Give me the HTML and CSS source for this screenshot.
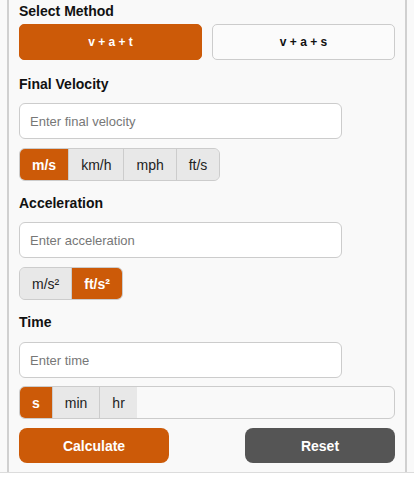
FILE: index.html
```html
<!DOCTYPE html>
<html>
<head>
<meta charset="utf-8">
<link rel="stylesheet" href="styles.css">
</head>
<body>
<div class="page">
  <div class="calc">
    <div class="group group-method">
      <div class="label label-method">Select Method</div>
      <div class="methods">
        <button class="method active">v + a + t</button>
        <button class="method">v + a + s</button>
      </div>
    </div>

    <div class="group">
      <div class="label">Final Velocity</div>
      <input class="field" type="text" placeholder="Enter final velocity">
      <div class="units">
        <button class="unit active">m/s</button>
        <button class="unit">km/h</button>
        <button class="unit">mph</button>
        <button class="unit">ft/s</button>
      </div>
    </div>

    <div class="group">
      <div class="label">Acceleration</div>
      <input class="field" type="text" placeholder="Enter acceleration">
      <div class="units">
        <button class="unit">m/s²</button>
        <button class="unit active">ft/s²</button>
      </div>
    </div>

    <div class="group group-time">
      <div class="label">Time</div>
      <input class="field" type="text" placeholder="Enter time">
      <div class="units units-full">
        <button class="unit active">s</button>
        <button class="unit">min</button>
        <button class="unit">hr</button>
      </div>
    </div>

    <div class="actions">
      <button class="btn btn-calc">Calculate</button>
      <button class="btn btn-reset">Reset</button>
    </div>
  </div>
</div>
</body>
</html>
```

FILE: styles.css
```css
* { box-sizing: border-box; }

html, body {
  margin: 0;
  padding: 0;
  background: #ffffff;
  font-family: "Liberation Sans", Arial, sans-serif;
  color: #111;
}

.page {
  background: #f9f9f9;
  border-bottom: 1px solid #dcdcdc;
  padding: 0 7px;
}

.calc {
  border-left: 2px solid #d0d0d0;
  border-right: 2px solid #d0d0d0;
  padding: 3px 10px 9px 10px;
}

.group {
  margin-bottom: 14px;
}

.group-method {
  margin-bottom: 16px;
}

.group-time {
  margin-bottom: 9px;
}

.label {
  font-size: 14px;
  font-weight: bold;
  line-height: 16px;
  margin-bottom: 11px;
  color: #111;
}

.label-method {
  margin-bottom: 5px;
}

.group-time .label {
  margin-bottom: 12px;
}

.methods {
  display: flex;
  gap: 10px;
}

.method {
  flex: 1;
  height: 36px;
  border: 1px solid #cccccc;
  border-radius: 5px;
  background: #fbfbfb;
  font-family: "Liberation Sans", Arial, sans-serif;
  font-size: 12px;
  font-weight: bold;
  color: #111;
  padding: 0;
}

.method.active {
  background: #cc5a08;
  border-color: #cc5a08;
  color: #fff;
}

.field {
  display: block;
  width: 323px;
  height: 36px;
  border: 1px solid #cccccc;
  border-radius: 6px;
  background: #fff;
  padding: 0 10px;
  font-family: "Liberation Sans", Arial, sans-serif;
  font-size: 13px;
  margin-bottom: 9px;
  outline: none;
}

.group-time .field {
  margin-bottom: 8px;
}

.field::placeholder {
  color: #777;
}

.units {
  display: inline-flex;
  border: 1px solid #cccccc;
  border-radius: 6px;
  overflow: hidden;
  height: 33px;
  background: #e8e8e8;
  vertical-align: top;
}

.units-full {
  display: flex;
  background: #f9f9f9;
}

.unit {
  height: 100%;
  border: none;
  border-right: 1px solid #cccccc;
  background: #e8e8e8;
  padding: 0 12px;
  font-family: "Liberation Sans", Arial, sans-serif;
  font-size: 14px;
  color: #222;
  margin: 0;
}

.unit:last-child {
  border-right: none;
}

.unit.active {
  background: #cc5a08;
  color: #fff;
  font-weight: bold;
}

.actions {
  display: flex;
  justify-content: space-between;
}

.btn {
  width: 150px;
  height: 35px;
  border: none;
  border-radius: 8px;
  color: #fff;
  font-family: "Liberation Sans", Arial, sans-serif;
  font-size: 14px;
  font-weight: bold;
}

.btn-calc { background: #cc5a08; }
.btn-reset { background: #555555; }
```
